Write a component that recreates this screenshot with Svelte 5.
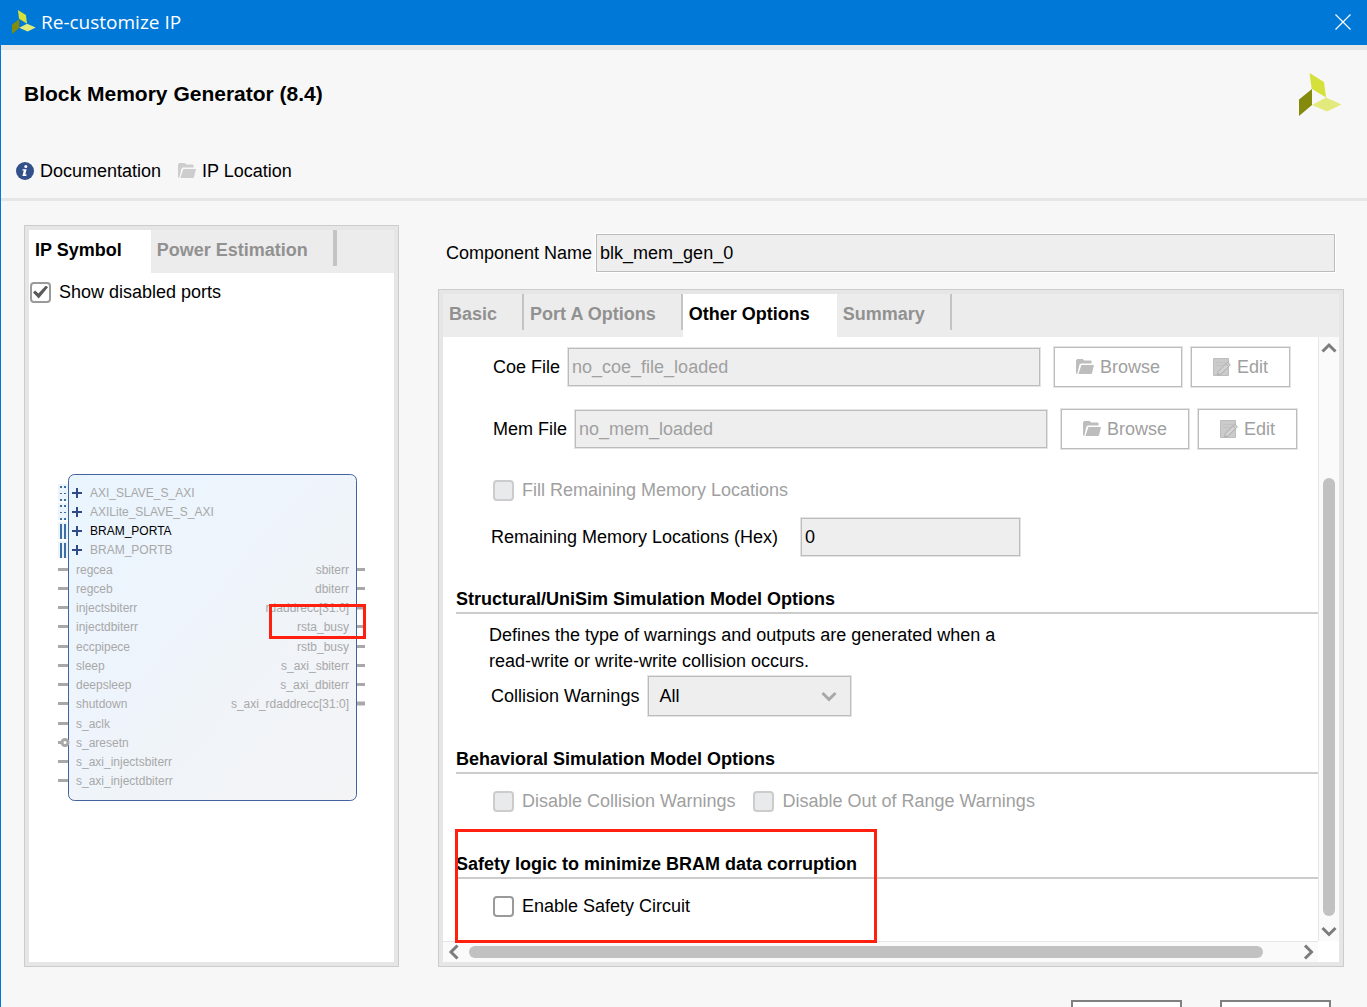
<script lang="ts">
  // IP customization dialog: symbol preview on the left, option tabs on the right
  let showDisabled = $state(true);
  let safetyCircuit = $state(false);
  let collision = $state('All');
  let componentName = $state('blk_mem_gen_0');

  const tabs = ['Basic', 'Port A Options', 'Other Options', 'Summary'];
  let activeTab = $state('Other Options');

  const files = [
    { id: 'coe', label: 'Coe File', value: 'no_coe_file_loaded' },
    { id: 'mem', label: 'Mem File', value: 'no_mem_loaded' }
  ];

  const buses = [
    { name: 'AXI_SLAVE_S_AXI', dotted: true, enabled: false },
    { name: 'AXILite_SLAVE_S_AXI', dotted: true, enabled: false },
    { name: 'BRAM_PORTA', dotted: false, enabled: true },
    { name: 'BRAM_PORTB', dotted: false, enabled: false }
  ];
  const inputs = [
    'regcea', 'regceb', 'injectsbiterr', 'injectdbiterr', 'eccpipece', 'sleep',
    'deepsleep', 'shutdown', 's_aclk', 's_aresetn', 's_axi_injectsbiterr', 's_axi_injectdbiterr'
  ];
  const outputs = [
    'sbiterr', 'dbiterr', 'rdaddrecc[31:0]', 'rsta_busy',
    'rstb_busy', 's_axi_sbiterr', 's_axi_dbiterr', 's_axi_rdaddrecc[31:0]'
  ];

  // centre line of a port row inside the symbol
  const rowY = (i: number) => Math.floor(18 + i * 19.25);
</script>

{#snippet logo()}
  <svg class="logo" viewBox="0 0 43 43" aria-hidden="true">
    <polygon points="10.5,0 25,9 27,24.5 12.7,15.7" fill="#d5e03a" />
    <polygon points="0,26.5 13,16 13,32 0,43" fill="#848a0b" />
    <polygon points="13,32 27,24.5 42.5,31.5 28,38.5" fill="#e3ea7c" />
  </svg>
{/snippet}

{#snippet folder()}
  <svg class="icon" viewBox="0 0 18 18" aria-hidden="true">
    <path d="M0 15.5V2.4L1.2 1H6.6L8.2 2.6H14.8L15.6 3.4V5.6H4.8L3.4 6.8 1.4 15.5z" fill="currentColor" />
    <path d="M5.4 7H18L16 15.2 15.2 16H2.4z" fill="currentColor" />
  </svg>
{/snippet}

{#snippet chevron(d: string)}
  <svg class="chevron" viewBox="0 0 18 18" aria-hidden="true">
    <path {d} fill="none" stroke="currentColor" stroke-width="3" />
  </svg>
{/snippet}

<div class="window">
  <div class="titlebar">
    {@render logo()}
    <span class="caption">Re-customize IP</span>
    <button class="close" aria-label="Close">
      <svg viewBox="0 0 16 16" aria-hidden="true">
        <path d="M.5.5l15 15M15.5.5l-15 15" stroke="#fff" stroke-width="1.2" />
      </svg>
    </button>
  </div>

  <header>
    <div class="product">
      <h1>Block Memory Generator (8.4)</h1>
      {@render logo()}
    </div>
    <nav>
      <a href="#documentation">
        <svg class="icon" viewBox="0 0 18 18" aria-hidden="true">
          <circle cx="9" cy="9" r="9" fill="#33508a" />
          <circle cx="9.8" cy="4.4" r="1.5" fill="#fff" />
          <path d="M6.6 7.2h4l-1.3 5.4h1.5l-.6 1.4H6.4l1.4-5.4H6.3z" fill="#fff" />
        </svg>
        Documentation
      </a>
      <a class="location" href="#location">{@render folder()}<span>IP Location</span></a>
    </nav>
  </header>

  <main>
    <section class="panel">
      <div class="tabs wide" role="tablist">
        <button class="tab active" role="tab" aria-selected="true">IP Symbol</button>
        <button class="tab" role="tab" aria-selected="false">Power Estimation</button>
      </div>
      <div class="symbol-pane">
        <label class="check"><input type="checkbox" bind:checked={showDisabled} />Show disabled ports</label>
        <div class="symbol">
          <svg viewBox="0 0 308 328" width="308" height="328" role="img" aria-label="Block memory symbol">
            <defs>
              <linearGradient id="body" x1="0" y1="0" x2="1" y2="1">
                <stop offset="0" stop-color="#e9f5fe" />
                <stop offset="0.45" stop-color="#eff4fc" />
                <stop offset="0.55" stop-color="#eff4f9" />
                <stop offset="1" stop-color="#f4f4f6" />
              </linearGradient>
            </defs>
            <rect x="10.5" y="0.5" width="288" height="326" rx="6" fill="url(#body)" stroke="#42639f" />
            {#each buses as bus, i}
              {@const y = rowY(i)}
              <rect x="0" y={y - 8} width="10" height="17" fill="#ebf4fb" />
              {#if bus.dotted}
                <path d="M2 {y - 5}h2m2 0h2M2 {y + 8}h2m2 0h2" stroke="#3b6ea5" stroke-width="2" />
                <path d="M2 {y + 1.5}h2m2 0h2" stroke="#3b6ea5" />
              {:else}
                <path d="M3 {y - 6}v15m4 0v-15" stroke="#3b6ea5" stroke-width="2" />
              {/if}
              <path d="M14 {y + 1}h10m-5-5v10" stroke="#2f4a87" stroke-width="2" />
              <text x="32" y={y + 5} class:on={bus.enabled}>{bus.name}</text>
            {/each}
            {#each inputs as port, i}
              {@const y = rowY(i + 4)}
              <path d="M0 {y + 0.5}h10" stroke="#a8a8a8" stroke-width="3" />
              {#if port === 's_aresetn'}
                <circle cx="7" cy={y + 0.5} r="3" fill="#fff" stroke="#a8a8a8" stroke-width="3" />
              {/if}
              <text x="18" y={y + 5}>{port}</text>
            {/each}
            {#each outputs as port, i}
              {@const y = rowY(i + 4)}
              <path d="M299 {y + 0.5}h8" stroke="#a8a8a8" stroke-width={port.endsWith(']') ? 4 : 3} />
              <text x="291" y={y + 5} text-anchor="end">{port}</text>
            {/each}
            <rect x="212.5" y="131.5" width="94" height="32" fill="none" stroke="#ff2010" stroke-width="3" />
          </svg>
        </div>
      </div>
    </section>

    <div class="config">
      <div class="name-row">
        <label for="component">Component Name</label>
        <input id="component" class="field" type="text" bind:value={componentName} />
      </div>

      <section class="panel">
        <div class="tabs" role="tablist">
          {#each tabs as tab}
            <button
              class="tab"
              class:active={tab === activeTab}
              role="tab"
              aria-selected={tab === activeTab}
              onclick={() => (activeTab = tab)}>{tab}</button>
          {/each}
        </div>

        <div class="scroll-pane">
          <div class="options">
            <div class="files">
              {#each files as file}
                <div class="file-row">
                  <label for={file.id}>{file.label}</label>
                  <input id={file.id} class="field" type="text" value={file.value} disabled />
                  <div class="actions">
                    <button class="btn" disabled>{@render folder()}Browse</button>
                    <button class="btn" disabled>
                      <svg class="icon" viewBox="0 0 18 18" aria-hidden="true">
                        <path d="M.5.5h15v17H.5z" fill="#cbcbcb" stroke="#bdbdbd" />
                        <path d="M3 4.5h10M3 7.5h8" stroke="#c2c2c2" />
                        <path d="M4.6 17l.8-3.6L14.6 4.2l2.8 2.6-9.2 9.2z" fill="#d2d2d2" stroke="#adadad" />
                        <path d="M13 6l2.6 2.6" stroke="#adadad" />
                      </svg>
                      Edit
                    </button>
                  </div>
                </div>
              {/each}
            </div>
            <label class="check fill"><input type="checkbox" disabled />Fill Remaining Memory Locations</label>
            <div class="hex-row">
              <label for="hex">Remaining Memory Locations (Hex)</label>
              <input id="hex" class="field" type="text" value="0" />
            </div>

            <section class="group">
              <h2>Structural/UniSim Simulation Model Options</h2>
              <p>Defines the type of warnings and outputs are generated when a read-write or write-write collision occurs.</p>
              <div class="collision">
                <label for="collision">Collision Warnings</label>
                <div class="select">
                  <select id="collision" bind:value={collision}>
                    <option>All</option>
                  </select>
                  {@render chevron('M2.5 6l6.5 6.5L15.5 6')}
                </div>
              </div>
            </section>

            <section class="group">
              <h2>Behavioral Simulation Model Options</h2>
              <div class="checks">
                <label class="check"><input type="checkbox" disabled />Disable Collision Warnings</label>
                <label class="check"><input type="checkbox" disabled />Disable Out of Range Warnings</label>
              </div>
            </section>

            <section class="group safety">
              <h2>Safety logic to minimize BRAM data corruption</h2>
              <div class="checks">
                <label class="check"><input type="checkbox" bind:checked={safetyCircuit} />Enable Safety Circuit</label>
              </div>
              <div class="highlight"></div>
            </section>
          </div>

          <div class="bar vertical">
            {@render chevron('M2.5 12.5L9 6l6.5 6.5')}
            <div class="track"><div class="thumb"></div></div>
            {@render chevron('M2.5 6L9 12.5 15.5 6')}
          </div>
          <div class="bar horizontal">
            {@render chevron('M12.5 2.5L6 9l6.5 6.5')}
            <div class="track"><div class="thumb"></div></div>
            {@render chevron('M6 2.5L12.5 9 6 15.5')}
          </div>
        </div>
      </section>
    </div>
  </main>

  <footer>
    <button aria-label="OK"></button>
    <button aria-label="Cancel"></button>
  </footer>
</div>

<style>
  :global(body) {
    background: #f7f7f7;
  }
  .window {
    box-sizing: border-box;
    height: 100vh;
    overflow: hidden;
    border-left: 1px solid #0078d7;
    background: #f7f7f7;
    color: #000;
    font: 18px/22px "Liberation Sans", Arial, sans-serif;
  }
  button, input, select {
    box-sizing: border-box;
    margin: 0;
    font: inherit;
    color: inherit;
  }
  h1, h2, p {
    margin: 0;
  }
  svg {
    display: block;
    flex: none;
  }

  .titlebar {
    display: flex;
    align-items: center;
    height: 45px;
    padding: 0 16px 2px 11px;
    box-sizing: border-box;
    background: #0078d7;
    color: #fff;
  }
  .titlebar .logo {
    width: 24px;
    height: 24px;
  }
  .caption {
    margin-left: 5px;
    font: 19px/24px "Open Sans", "Noto Sans", sans-serif;
  }
  .close {
    margin-left: auto;
    padding: 0;
    border: 0;
    background: none;
  }
  .close svg {
    width: 16px;
    height: 16px;
  }

  header {
    border-top: 5px solid #e6e6e6;
    border-bottom: 3px solid #e6e6e6;
    padding: 23px 25px 16px 15px;
  }
  .product {
    display: flex;
    align-items: flex-start;
    justify-content: space-between;
    padding-left: 8px;
  }
  .product .logo {
    width: 43px;
    height: 43px;
  }
  h1 {
    font-size: 21px;
    line-height: 42px;
  }
  nav {
    display: flex;
    gap: 17px;
    margin-top: 44px;
  }
  nav a {
    display: flex;
    align-items: center;
    gap: 6px;
    color: #000;
    text-decoration: none;
  }
  .icon {
    width: 18px;
    height: 18px;
  }
  .location .icon {
    color: #cdcdcd;
  }

  main {
    display: grid;
    grid-template-columns: 375px 1fr;
    gap: 39px;
    padding: 24px 23px 0;
  }
  .panel {
    display: flex;
    flex-direction: column;
    border: 1px solid #ccc;
    padding: 4px;
    background: #e6e6e6;
  }
  .tabs {
    display: flex;
    height: 43px;
    background: #ececec;
  }
  .tab {
    position: relative;
    border: 0;
    padding: 0 27px 3px 6px;
    background: none;
    color: #919191;
    font-weight: bold;
    white-space: nowrap;
  }
  .tab::after {
    content: "";
    position: absolute;
    top: 0;
    right: 0;
    width: 2px;
    height: 36px;
    background: #c4c4c4;
  }
  .wide .tab {
    padding-right: 29px;
  }
  .wide .tab::after {
    width: 4px;
  }
  .tab.active {
    background: #fff;
    color: #000;
  }
  .tab.active::after {
    display: none;
  }

  .symbol-pane {
    flex: 1;
    display: flex;
    flex-direction: column;
    padding: 8px 1px 0;
    background: #fff;
  }
  .symbol {
    flex: 1;
    display: flex;
    align-items: center;
    justify-content: center;
    padding-top: 10px;
  }
  .symbol text {
    font-size: 12px;
    fill: #a8a8a8;
  }
  .symbol text.on {
    fill: #000;
  }

  .check {
    display: flex;
    align-items: center;
    gap: 8px;
    height: 22px;
  }
  .check input {
    appearance: none;
    display: grid;
    place-items: center;
    width: 21px;
    height: 21px;
    border: 2px solid #9a9a9a;
    border-radius: 4px;
    background: #fff;
  }
  .check input:checked::after {
    content: "";
    width: 15px;
    height: 13px;
    background: #5a5a5a;
    clip-path: polygon(0 54%, 14% 38%, 36% 62%, 86% 0, 100% 14%, 38% 100%);
  }
  .check input:disabled {
    border-color: #ccc;
    background: #e9eaec;
  }
  .check:has(input:disabled) {
    color: #a0a0a0;
  }

  .config {
    min-width: 0;
    padding-top: 9px;
  }
  .name-row {
    display: flex;
    align-items: center;
    gap: 4px;
    padding: 0 9px 17px 8px;
  }
  .name-row .field {
    flex: 1;
    box-shadow: 0 0 0 1px #fff;
  }
  .field {
    height: 38px;
    padding: 0 3px;
    border: 1px solid #bcbcbc;
    border-radius: 0;
    background: #eee;
    box-shadow: 0 0 0 1px #e4e4e4;
  }
  .field:disabled {
    color: #a0a0a0;
  }

  .scroll-pane {
    display: grid;
    grid-template: auto 21px / 1fr 21px;
    background: #fff;
  }
  .options {
    padding: 10px 0 0 13px;
  }
  .files {
    display: grid;
    gap: 22px;
    padding-left: 37px;
  }
  .file-row {
    display: flex;
    align-items: center;
    gap: 8px;
  }
  .file-row .field {
    width: 472px;
  }
  .actions {
    display: flex;
    gap: 9px;
    margin-left: 6px;
  }
  .btn {
    display: flex;
    align-items: center;
    gap: 6px;
    height: 40px;
    padding: 0 21px;
    border: 1px solid #bcbcbc;
    background: #fff;
    box-shadow: 0 0 0 1px #e4e4e4;
    color: #a0a0a0;
  }
  .btn .icon {
    color: #bdbdbd;
  }
  .fill {
    margin: 30px 0 17px 37px;
  }
  .hex-row {
    display: flex;
    align-items: center;
    gap: 23px;
    padding-left: 35px;
  }
  .hex-row .field {
    width: 219px;
  }

  .group {
    position: relative;
    margin-top: 32px;
  }
  h2 {
    padding-bottom: 2px;
    border-bottom: 2px solid #ccc;
    font-size: 18px;
    line-height: 22px;
  }
  p {
    max-width: 540px;
    padding: 8px 0 2px 33px;
    line-height: 26px;
    box-sizing: border-box;
  }
  .collision {
    display: flex;
    align-items: center;
    gap: 9px;
    padding-left: 35px;
  }
  .select {
    position: relative;
  }
  select {
    appearance: none;
    display: block;
    width: 203px;
    height: 40px;
    padding: 0 10px;
    border: 1px solid #bcbcbc;
    border-radius: 0;
    background: #eee;
    box-shadow: 0 0 0 1px #e4e4e4;
  }
  .select .chevron {
    position: absolute;
    top: 11px;
    right: 13px;
    color: #a8a8a8;
    pointer-events: none;
  }
  .checks {
    display: flex;
    gap: 18px;
    padding: 16px 0 0 37px;
  }
  .safety {
    margin-top: 41px;
    padding-bottom: 24px;
  }
  .highlight {
    position: absolute;
    z-index: 1;
    top: -24px;
    bottom: -2px;
    left: -1px;
    width: 416px;
    border: 3px solid #ff2010;
    pointer-events: none;
  }

  .chevron {
    width: 18px;
    height: 18px;
  }
  .bar {
    display: flex;
    align-items: center;
    background: #fafafa;
    color: #7c7c7c;
  }
  .track {
    flex: 1;
    display: flex;
  }
  .thumb {
    border-radius: 6px;
    background: #c1c1c1;
  }
  .vertical {
    flex-direction: column;
    padding: 2px 0 1px;
    border-left: 1px solid #e6e6e6;
  }
  .vertical .track {
    flex-direction: column;
  }
  .vertical .track::before {
    content: "";
    flex: 121;
  }
  .vertical .thumb {
    flex: 438;
    width: 12px;
  }
  .vertical .track::after {
    content: "";
    flex: 6;
  }
  .horizontal {
    padding: 0 1px 0 2px;
    border-top: 1px solid #e6e6e6;
  }
  .horizontal .track::before {
    content: "";
    flex: 6;
  }
  .horizontal .thumb {
    flex: 794;
    height: 12px;
  }
  .horizontal .track::after {
    content: "";
    flex: 36;
  }

  footer {
    display: flex;
    justify-content: flex-end;
    gap: 38px;
    padding: 33px 36px 0;
  }
  footer button {
    width: 111px;
    height: 40px;
    border: 2px solid #808080;
    background: #fff;
  }
</style>
